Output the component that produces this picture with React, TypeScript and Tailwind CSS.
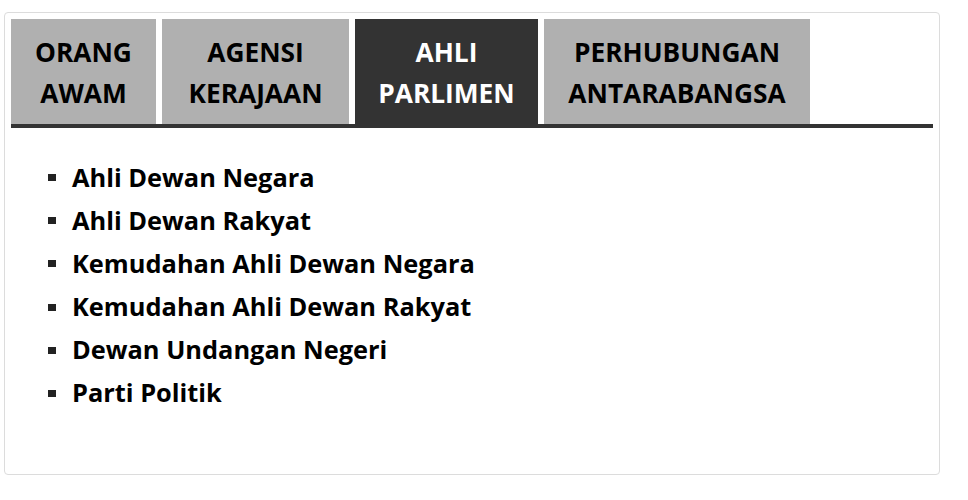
const tabs = [
  { label: ['ORANG', 'AWAM'], width: 'w-[145px]', active: false },
  { label: ['AGENSI', 'KERAJAAN'], width: 'w-[187px]', active: false },
  { label: ['AHLI', 'PARLIMEN'], width: 'w-[183px]', active: true },
  { label: ['PERHUBUNGAN', 'ANTARABANGSA'], width: 'w-[266px]', active: false },
];

const links = [
  'Ahli Dewan Negara',
  'Ahli Dewan Rakyat',
  'Kemudahan Ahli Dewan Negara',
  'Kemudahan Ahli Dewan Rakyat',
  'Dewan Undangan Negeri',
  'Parti Politik',
];

export default function App() {
  return (
    <div className="min-h-[500px] bg-white pt-3 pl-1" style={{ fontFamily: '"Open Sans", "Noto Sans", sans-serif' }}>
      <div className="w-[936px] h-[463px] rounded-[4px] border border-[#dcdcdc] p-[6px]">
        {/* tab strip */}
        <div className="flex gap-[6px] border-b-4 border-[#333333]">
          {tabs.map((tab) => (
            <div
              key={tab.label.join(' ')}
              className={`${tab.width} h-[105px] pt-[2px] flex flex-col items-center justify-center text-[26.3px] font-bold leading-[41px] ${
                tab.active ? 'bg-[#333333] text-white' : 'bg-[#b0b0b0] text-black'
              }`}
            >
              <span>{tab.label[0]}</span>
              <span>{tab.label[1]}</span>
            </div>
          ))}
        </div>

        {/* panel */}
        <ul className="pt-[27px] pl-[37px]">
          {links.map((item) => (
            <li key={item} className="flex items-center gap-4 h-[43.2px] text-[25.4px] font-bold text-black">
              <span className="w-2 h-[7px] bg-[#222222] shrink-0 mt-[2px]" />
              <span>{item}</span>
            </li>
          ))}
        </ul>
      </div>
    </div>
  );
}
